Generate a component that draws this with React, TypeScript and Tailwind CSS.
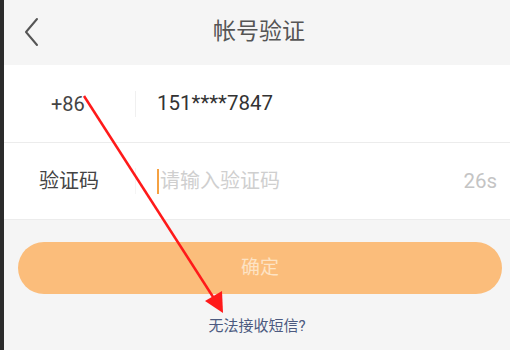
const font = "font-['Roboto','Noto_Sans_CJK_SC',sans-serif]";

function BackIcon() {
  return (
    <svg width="16" height="30" viewBox="0 0 16 30" fill="none">
      <path d="M14 2 L3 15 L14 28" stroke="#555" strokeWidth="2" strokeLinecap="round" strokeLinejoin="round" />
    </svg>
  );
}

function Arrow() {
  return (
    <svg className="pointer-events-none absolute left-0 top-0" width="510" height="350" viewBox="0 0 510 350">
      <line x1="84" y1="96" x2="215" y2="300" stroke="#ff1a1a" strokeWidth="2.5" />
      <polygon points="223,313 205,301 222,291" fill="#ff1a1a" />
    </svg>
  );
}

export default function App() {
  return (
    <div className={`relative flex h-[350px] w-[510px] overflow-hidden bg-[#f5f5f5] ${font}`}>
      <div className="w-[4px] shrink-0 bg-[#2b2b2b]" />
      <div className="flex flex-1 flex-col">
        <div className="relative flex h-[65px] items-center justify-center">
          <div className="absolute left-[19px] top-[17px]">
            <BackIcon />
          </div>
          <span className="pl-[4px] text-[23px] text-[#555]">帐号验证</span>
        </div>
        <div className="flex flex-col bg-white">
          <div className="flex h-[78px] items-center border-b border-[#ececec]">
            <span className="w-[131px] pl-[47px] text-[20px] text-[#444]">+86</span>
            <div className="h-[26px] w-px bg-[#f0f0f0]" />
            <span className="pl-[21px] text-[20.5px] text-[#333]">151****7847</span>
          </div>
          <div className="flex h-[77px] items-center border-b border-[#ececec]">
            <span className="w-[131px] pl-[35px] text-[20px] text-[#444]">验证码</span>
            <div className="h-[26px] w-px bg-[#f5f5f5]" />
            <div className="ml-[21px] h-[25px] w-[2px] bg-[#f5a142]" />
            <span className="flex-1 pl-[1px] text-[20px] text-[#cfcfcf]">请输入验证码</span>
            <span className="pr-[13px] text-[20.5px] text-[#c4c4c4]">26s</span>
          </div>
        </div>
        <div className="ml-[14px] mr-[8px] mt-[22px] flex h-[52px] items-center justify-center rounded-full bg-[#fbbd7b]">
          <span className="text-[19px] text-[#fde3c4]">确定</span>
        </div>
        <div className="mt-[21px] flex justify-center">
          <span className="text-[15px] text-[#4c5a80]">无法接收短信?</span>
        </div>
      </div>
      <Arrow />
    </div>
  );
}
